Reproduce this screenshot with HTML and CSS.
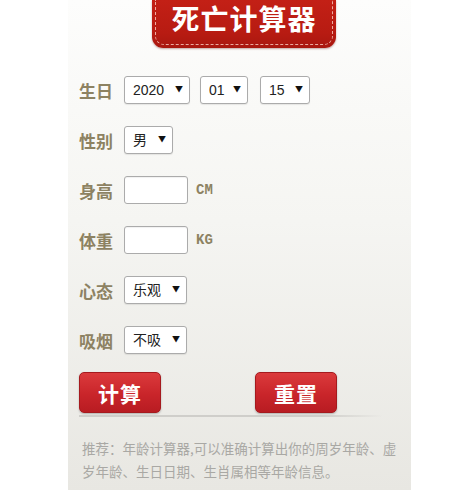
FILE: index.html
```html
<!DOCTYPE html>
<html lang="zh">
<head>
<meta charset="utf-8">
<title>死亡计算器</title>
<link rel="stylesheet" href="styles.css">
</head>
<body>
<div class="panel">
  <div class="header"><div class="header-inner">死亡计算器</div></div>
  <form class="form">
    <div class="row">
      <span class="label">生日</span>
      <span class="sel w-year"><select><option>2020</option></select></span>
      <span class="sel w-month"><select><option>01</option></select></span>
      <span class="sel w-day"><select><option>15</option></select></span>
    </div>
    <div class="row">
      <span class="label">性别</span>
      <span class="sel w-sex"><select><option>男</option></select></span>
    </div>
    <div class="row">
      <span class="label">身高</span>
      <input class="txt" type="text">
      <span class="unit">CM</span>
    </div>
    <div class="row">
      <span class="label">体重</span>
      <input class="txt" type="text">
      <span class="unit">KG</span>
    </div>
    <div class="row">
      <span class="label">心态</span>
      <span class="sel w-mood"><select><option>乐观</option></select></span>
    </div>
    <div class="row">
      <span class="label">吸烟</span>
      <span class="sel w-mood"><select><option>不吸</option></select></span>
    </div>
    <div class="buttons">
      <button type="button" class="btn">计算</button>
      <button type="button" class="btn btn-reset">重置</button>
    </div>
    <div class="divider"></div>
  </form>
  <p class="tip">推荐：年龄计算器,可以准确计算出你的周岁年龄、虚岁年龄、生日日期、生肖属相等年龄信息。</p>
</div>
</body>
</html>
```
FILE: styles.css
```css
html, body {
  margin: 0;
  padding: 0;
  background: #ffffff;
}
body {
  width: 454px;
  height: 498px;
  font-family: "Noto Sans CJK SC", "Noto Sans", sans-serif;
}
.panel {
  margin-left: 68px;
  width: 343px;
  height: 490px;
  background: linear-gradient(to bottom, #fdfdfc 0%, #f5f5f2 45%, #e8e7e2 100%);
  display: flex;
  flex-direction: column;
}
.header {
  margin-left: 84px;
  width: 184px;
  height: 48px;
  background: linear-gradient(to bottom, #c32016 0%, #b71b12 70%, #a8170f 100%);
  border-radius: 0 0 11px 11px;
  padding: 0 3px 3px 3px;
  box-sizing: border-box;
  box-shadow: 0 1px 2px rgba(90, 10, 5, 0.35);
}
.header-inner {
  height: 100%;
  box-sizing: border-box;
  border: 1px dashed rgba(255, 220, 210, 0.75);
  border-top: none;
  border-radius: 0 0 9px 9px;
  color: #fff;
  font-size: 28px;
  font-weight: 700;
  line-height: 34px;
  padding-top: 1px;
  text-align: center;
  letter-spacing: 1px;
}
.form {
  margin: 17px 0 0 0;
  padding: 0 0 0 11px;
  display: flex;
  flex-direction: column;
}
.row {
  height: 50px;
  display: flex;
  align-items: center;
}
.label {
  width: 33px;
  margin-right: 12px;
  color: #8d8262;
  font-size: 17px;
  font-weight: 700;
  white-space: nowrap;
}
.sel {
  position: relative;
  display: inline-block;
  height: 28px;
  margin-right: 10px;
}
.sel select {
  appearance: none;
  -webkit-appearance: none;
  width: 100%;
  height: 28px;
  box-sizing: border-box;
  border: 1px solid #ababab;
  border-radius: 3px;
  background: #fff;
  padding: 0 0 0 8px;
  font-family: "Liberation Sans", "Noto Sans CJK SC", sans-serif;
  font-size: 14px;
  color: #222;
  box-shadow: 0 1px 1px rgba(0, 0, 0, 0.08);
}
.sel::after {
  content: "▼";
  position: absolute;
  right: 7px;
  top: 8px;
  font-size: 8px;
  line-height: 10px;
  color: #111;
  pointer-events: none;
}
.w-year { width: 66px; }
.w-month { width: 48px; margin-right: 12px; }
.w-day { width: 50px; }
.w-sex { width: 49px; }
.w-mood { width: 63px; }
.txt {
  width: 64px;
  height: 28px;
  box-sizing: border-box;
  border: 1px solid #ababab;
  border-radius: 3px;
  background: #fff;
  margin: 0 8px 0 0;
  padding: 0 4px;
  box-shadow: inset 0 1px 1px rgba(0, 0, 0, 0.06);
}
.unit {
  color: #8d8262;
  font-family: "Liberation Mono", monospace;
  font-weight: 700;
  font-size: 14px;
}
.buttons {
  margin-top: 7px;
  display: flex;
  gap: 94px;
}
.btn {
  width: 82px;
  height: 41px;
  border: 1px solid #a51a1e;
  border-radius: 5px;
  background: linear-gradient(to bottom, #db3a3c 0%, #c9252a 55%, #b81c22 100%);
  color: #fff;
  font-family: "Noto Sans CJK SC", sans-serif;
  font-size: 21px;
  font-weight: 700;
  letter-spacing: 1px;
  padding: 0;
  box-shadow: 0 1px 2px rgba(0, 0, 0, 0.25);
}
.divider {
  margin-top: 2px;
  width: 304px;
  height: 2px;
  background: linear-gradient(to right, #cfceca 0%, #cfceca 80%, rgba(207, 206, 202, 0) 100%);
}
.tip {
  margin: 20px 0 0 14px;
  width: 318px;
  color: #a9a8a4;
  font-size: 13.5px;
  line-height: 23px;
}
```
